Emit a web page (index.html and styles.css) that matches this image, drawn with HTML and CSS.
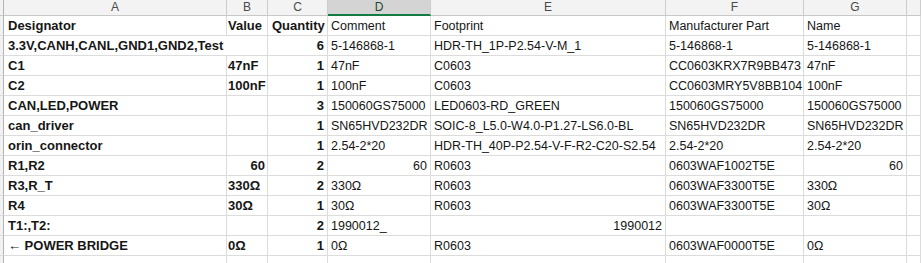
FILE: index.html
```html
<!DOCTYPE html>
<html>
<head>
<meta charset="utf-8">
<link rel="stylesheet" href="styles.css">
<title>BOM</title>
</head>
<body>
<div class="sheet">
  <div class="rh hd"></div>
  <div class="ch">A</div><div class="ch">B</div><div class="ch">C</div><div class="ch sel">D</div><div class="ch">E</div><div class="ch">F</div><div class="ch">G</div><div class="ch"></div>

  <div class="rh"></div>
  <div class="c b">Designator</div><div class="c b v">Value</div><div class="c b">Quantity</div><div class="c">Comment</div><div class="c">Footprint</div><div class="c">Manufacturer Part</div><div class="c">Name</div><div class="c"></div>

  <div class="rh"></div>
  <div class="c b span2">3.3V,CANH,CANL,GND1,GND2,Test</div><div class="c b r">6</div><div class="c">5-146868-1</div><div class="c">HDR-TH_1P-P2.54-V-M_1</div><div class="c">5-146868-1</div><div class="c">5-146868-1</div><div class="c"></div>

  <div class="rh"></div>
  <div class="c b">C1</div><div class="c b v">47nF</div><div class="c b r">1</div><div class="c">47nF</div><div class="c">C0603</div><div class="c">CC0603KRX7R9BB473</div><div class="c">47nF</div><div class="c"></div>

  <div class="rh"></div>
  <div class="c b">C2</div><div class="c b v">100nF</div><div class="c b r">1</div><div class="c">100nF</div><div class="c">C0603</div><div class="c">CC0603MRY5V8BB104</div><div class="c">100nF</div><div class="c"></div>

  <div class="rh"></div>
  <div class="c b">CAN,LED,POWER</div><div class="c b v"></div><div class="c b r">3</div><div class="c">150060GS75000</div><div class="c">LED0603-RD_GREEN</div><div class="c">150060GS75000</div><div class="c">150060GS75000</div><div class="c"></div>

  <div class="rh"></div>
  <div class="c b">can_driver</div><div class="c b v"></div><div class="c b r">1</div><div class="c">SN65HVD232DR</div><div class="c">SOIC-8_L5.0-W4.0-P1.27-LS6.0-BL</div><div class="c">SN65HVD232DR</div><div class="c">SN65HVD232DR</div><div class="c"></div>

  <div class="rh"></div>
  <div class="c b">orin_connector</div><div class="c b v"></div><div class="c b r">1</div><div class="c">2.54-2*20</div><div class="c">HDR-TH_40P-P2.54-V-F-R2-C20-S2.54</div><div class="c">2.54-2*20</div><div class="c">2.54-2*20</div><div class="c"></div>

  <div class="rh"></div>
  <div class="c b">R1,R2</div><div class="c b v r">60</div><div class="c b r">2</div><div class="c r">60</div><div class="c">R0603</div><div class="c">0603WAF1002T5E</div><div class="c r">60</div><div class="c"></div>

  <div class="rh"></div>
  <div class="c b">R3,R_T</div><div class="c b v">330Ω</div><div class="c b r">2</div><div class="c">330Ω</div><div class="c">R0603</div><div class="c">0603WAF3300T5E</div><div class="c">330Ω</div><div class="c"></div>

  <div class="rh"></div>
  <div class="c b">R4</div><div class="c b v">30Ω</div><div class="c b r">1</div><div class="c">30Ω</div><div class="c">R0603</div><div class="c">0603WAF3300T5E</div><div class="c">30Ω</div><div class="c"></div>

  <div class="rh"></div>
  <div class="c b">T1:,T2:</div><div class="c b v"></div><div class="c b r">2</div><div class="c">1990012_</div><div class="c r">1990012</div><div class="c"></div><div class="c"></div><div class="c"></div>

  <div class="rh"></div>
  <div class="c b">← POWER BRIDGE</div><div class="c b v">0Ω</div><div class="c b r">1</div><div class="c">0Ω</div><div class="c">R0603</div><div class="c">0603WAF0000T5E</div><div class="c">0Ω</div><div class="c"></div>

  <div class="rh"></div>
  <div class="c"></div><div class="c"></div><div class="c"></div><div class="c"></div><div class="c"></div><div class="c"></div><div class="c"></div><div class="c"></div>
</div>
</body>
</html>
```

FILE: styles.css
```css
html, body {
  margin: 0;
  padding: 0;
  background: #ffffff;
  overflow: hidden;
}

.sheet {
  display: grid;
  grid-template-columns: 4px 223px 41px 60px 103px 235px 138px 103px minmax(0, 1fr);
  grid-template-rows: 16px repeat(13, 20px);
  width: 100%;
  font-family: "Liberation Sans", Arial, sans-serif;
  color: #161616;
}

.rh {
  box-sizing: border-box;
  background: #f2f2f2;
  border-right: 1px solid #b4b4b4;
  border-bottom: 1px solid #dcdcdc;
}

.rh.hd {
  border-bottom: 1px solid #c8c8c8;
}

.ch {
  box-sizing: border-box;
  background: #f3f3f3;
  border-right: 1px solid #cdcdcd;
  border-bottom: 1px solid #c8c8c8;
  font-size: 12px;
  line-height: 15px;
  text-align: center;
  color: #4a4a4a;
}

.ch.sel {
  background: #d4d4d4;
  border-bottom: 2px solid #137c43;
  color: #20472f;
  line-height: 14px;
}

.c {
  box-sizing: border-box;
  border-right: 1px solid #dcdcdc;
  border-bottom: 1px solid #dcdcdc;
  padding: 0 3px 0 3px;
  font-size: 12.5px;
  line-height: 20px;
  white-space: nowrap;
  overflow: hidden;
}

.c.b {
  font-weight: bold;
  font-size: 13px;
  padding-left: 4px;
}

.c.b.v {
  padding-left: 1px;
  padding-right: 2px;
}

.c.r {
  text-align: right;
}

.span2 {
  grid-column: span 2;
}
```
